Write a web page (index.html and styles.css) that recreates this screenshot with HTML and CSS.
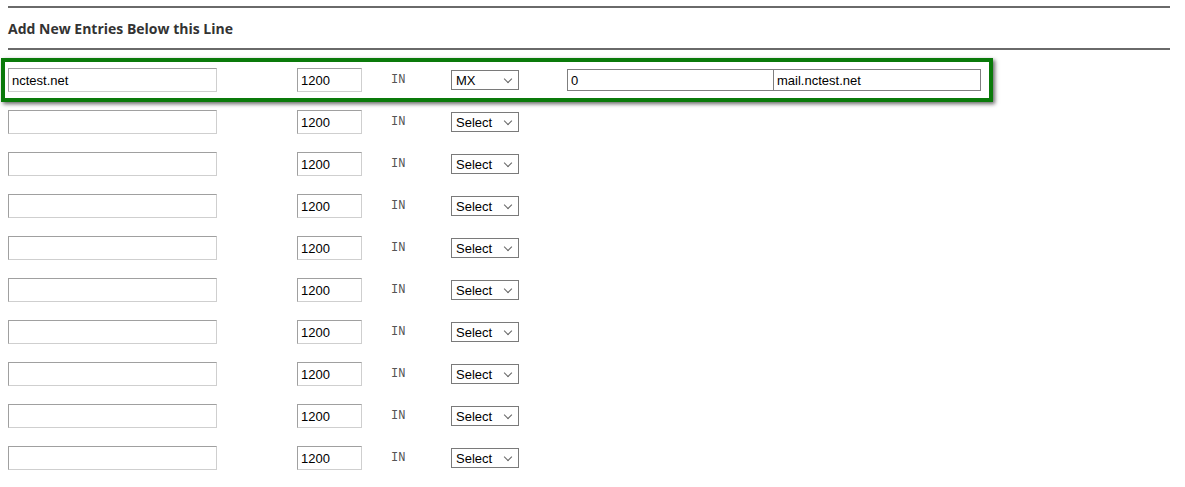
FILE: index.html
```html
<!DOCTYPE html>
<html lang="en">
<head>
  <meta charset="UTF-8">
  <title>Add New Entries</title>
  <link rel="stylesheet" href="styles.css">
</head>
<body>
  <div class="page">
    <div class="section-head">
      <h3>Add New Entries Below this Line</h3>
    </div>

    <div class="entries">
      <div class="entry highlight">
        <div class="col-name"><input class="field name" type="text" value="nctest.net"></div>
        <div class="col-ttl"><input class="field ttl" type="text" value="1200"></div>
        <div class="col-class">IN</div>
        <div class="col-type"><span class="select-wrap"><select><option>MX</option></select></span></div>
        <input class="field extra" type="text" value="0">
        <input class="field extra" type="text" value="mail.nctest.net">
      </div>

      <div class="entry">
        <div class="col-name"><input class="field name" type="text"></div>
        <div class="col-ttl"><input class="field ttl" type="text" value="1200"></div>
        <div class="col-class">IN</div>
        <div class="col-type"><span class="select-wrap"><select><option>Select</option></select></span></div>
      </div>
      <div class="entry">
        <div class="col-name"><input class="field name" type="text"></div>
        <div class="col-ttl"><input class="field ttl" type="text" value="1200"></div>
        <div class="col-class">IN</div>
        <div class="col-type"><span class="select-wrap"><select><option>Select</option></select></span></div>
      </div>
      <div class="entry">
        <div class="col-name"><input class="field name" type="text"></div>
        <div class="col-ttl"><input class="field ttl" type="text" value="1200"></div>
        <div class="col-class">IN</div>
        <div class="col-type"><span class="select-wrap"><select><option>Select</option></select></span></div>
      </div>
      <div class="entry">
        <div class="col-name"><input class="field name" type="text"></div>
        <div class="col-ttl"><input class="field ttl" type="text" value="1200"></div>
        <div class="col-class">IN</div>
        <div class="col-type"><span class="select-wrap"><select><option>Select</option></select></span></div>
      </div>
      <div class="entry">
        <div class="col-name"><input class="field name" type="text"></div>
        <div class="col-ttl"><input class="field ttl" type="text" value="1200"></div>
        <div class="col-class">IN</div>
        <div class="col-type"><span class="select-wrap"><select><option>Select</option></select></span></div>
      </div>
      <div class="entry">
        <div class="col-name"><input class="field name" type="text"></div>
        <div class="col-ttl"><input class="field ttl" type="text" value="1200"></div>
        <div class="col-class">IN</div>
        <div class="col-type"><span class="select-wrap"><select><option>Select</option></select></span></div>
      </div>
      <div class="entry">
        <div class="col-name"><input class="field name" type="text"></div>
        <div class="col-ttl"><input class="field ttl" type="text" value="1200"></div>
        <div class="col-class">IN</div>
        <div class="col-type"><span class="select-wrap"><select><option>Select</option></select></span></div>
      </div>
      <div class="entry">
        <div class="col-name"><input class="field name" type="text"></div>
        <div class="col-ttl"><input class="field ttl" type="text" value="1200"></div>
        <div class="col-class">IN</div>
        <div class="col-type"><span class="select-wrap"><select><option>Select</option></select></span></div>
      </div>
      <div class="entry">
        <div class="col-name"><input class="field name" type="text"></div>
        <div class="col-ttl"><input class="field ttl" type="text" value="1200"></div>
        <div class="col-class">IN</div>
        <div class="col-type"><span class="select-wrap"><select><option>Select</option></select></span></div>
      </div>
    </div>
  </div>
</body>
</html>
```

FILE: styles.css
```css
body {
  margin: 0;
  background-color: #fff;
  font-family: 'Liberation Sans', Arial, sans-serif;
  font-size: 13px;
  color: #000;
}

.page {
  padding: 6px 0 0 8px;
}

.section-head {
  width: 1162px;
  height: 44px;
  box-sizing: border-box;
  border-top: 2px solid #6a6a6a;
  border-bottom: 2px solid #6a6a6a;
}

.section-head h3 {
  margin: 0;
  font-family: 'Open Sans', sans-serif;
  font-size: 14px;
  font-weight: 700;
  line-height: 42px;
  color: #333;
}

.entries {
  margin-top: 9px;
}

.entry {
  display: flex;
  align-items: center;
  height: 42px;
}

.entry.highlight {
  width: 992px;
  height: 44px;
  box-sizing: border-box;
  margin: -1px 0 -1px -7px;
  padding-left: 3px;
  border: 4px solid #0a7a0a;
  box-shadow: 2px 2px 4px rgba(0, 0, 0, 0.6);
}

.field {
  box-sizing: border-box;
  height: 24px;
  margin: 0;
  padding: 0 3px;
  border: 1px solid;
  border-color: #a0a0a0 #cfcfcf #cfcfcf #a0a0a0;
  background-color: #fff;
  font-family: 'Liberation Sans', Arial, sans-serif;
  font-size: 13px;
  color: #000;
  outline: none;
}

.col-name {
  width: 289px;
}

.field.name {
  width: 209px;
}

.col-ttl {
  width: 94px;
}

.field.ttl {
  width: 65px;
}

.col-class {
  width: 60px;
  font-family: 'Liberation Mono', 'Courier New', monospace;
  font-size: 12px;
  color: #555;
  margin-top: -1px;
}

.col-type {
  width: 116px;
}

.select-wrap {
  position: relative;
  display: inline-block;
}

.select-wrap select {
  appearance: none;
  -webkit-appearance: none;
  box-sizing: border-box;
  width: 68px;
  height: 20px;
  margin: 0;
  padding: 0 0 0 4px;
  border: 1px solid #7a7a7a;
  border-radius: 0;
  background-color: #fff;
  font-family: 'Liberation Sans', Arial, sans-serif;
  font-size: 13px;
  color: #000;
}

.select-wrap::after {
  content: '';
  position: absolute;
  right: 8px;
  top: 6px;
  width: 5px;
  height: 5px;
  border-right: 1px solid #666;
  border-bottom: 1px solid #666;
  transform: rotate(45deg);
  pointer-events: none;
}

.field.extra {
  width: 207px;
  height: 22px;
  border-color: #7f7f7f;
}

.field.extra + .field.extra {
  margin-left: -1px;
  width: 208px;
}
```
